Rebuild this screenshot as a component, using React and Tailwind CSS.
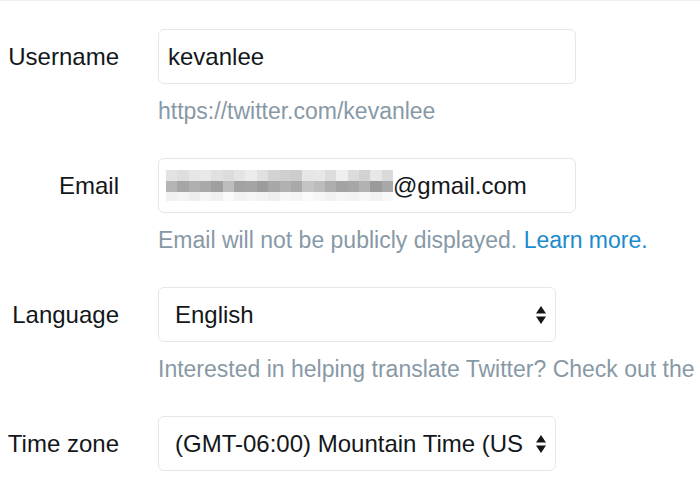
import React from "react";

const mosaic = [
  ["#e3e3e3", "#dedede", "#e6e6e6", "#e9e9e9", "#e1e1e1", "#dcdcdc", "#e4e4e4", "#ececec", "#e0e0e0", "#d3d3d3", "#cfcfcf", "#cccccc", "#e6e6e6", "#e8e8e8", "#dddddd", "#efefef", "#dcdcdc", "#d2d2d2", "#e7e7e7", "#dadada"],
  ["#b5b5b5", "#a6a6a6", "#b0b0b0", "#a9a9a9", "#9f9f9f", "#bdbdbd", "#a2a2a2", "#a4a4a4", "#9c9c9c", "#a7a7a7", "#b1b1b1", "#a9a9a9", "#c4c4c4", "#bcbcbc", "#aeaeae", "#a3a3a3", "#a6a6a6", "#b2b2b2", "#9a9a9a", "#a8a8a8"],
  ["#f1f1f1", "#f4f4f4", "#eeeeee", "#f6f6f6", "#f0f0f0", "#fafafa", "#f2f2f2", "#f5f5f5", "#f3f3f3", "#efefef", "#f7f7f7", "#f4f4f4", "#fafafa", "#f6f6f6", "#f1f1f1", "#f5f5f5", "#f3f3f3", "#f7f7f7", "#f2f2f2", "#f8f8f8"],
];

function Arrows() {
  return (
    <svg width="12" height="20" viewBox="0 0 12 20" className="shrink-0">
      <path d="M6 1 L11 8.5 L1 8.5 Z" fill="#14171a" />
      <path d="M6 19 L11 11.5 L1 11.5 Z" fill="#14171a" />
    </svg>
  );
}

function Row({ label, children, help }) {
  return (
    <div className="flex mb-[34px]">
      <div className="w-[119px] h-[55px] shrink-0 flex items-center justify-end text-[24px] text-[#14171a]">
        {label}
      </div>
      <div className="ml-[39px] flex flex-col">
        {children}
        {help && <div className="mt-[14px] text-[23px] leading-[26px] text-[#8899a6] whitespace-nowrap">{help}</div>}
      </div>
    </div>
  );
}

function Field({ children }) {
  return (
    <div className="w-[418px] h-[55px] border border-[#e1e8ed] rounded-[6px] flex items-center px-[7px] text-[24px] text-[#14171a]">
      {children}
    </div>
  );
}

function Select({ value }) {
  return (
    <div className="w-[398px] h-[55px] border border-[#e1e8ed] rounded-[6px] flex items-center pl-[16px] pr-[8px] text-[24px] text-[#14171a] gap-[6px]">
      <span className="flex-1 whitespace-nowrap">{value}</span>
      <Arrows />
    </div>
  );
}

export default function App() {
  return (
    <div className="w-[700px] h-[500px] overflow-hidden bg-white border-t border-[#f0f0f0] pt-[28px]" style={{ fontFamily: '"Liberation Sans", Arial, sans-serif' }}>
      <Row label="Username" help="https://twitter.com/kevanlee">
        <Field>
          <span className="ml-[2px]">kevanlee</span>
        </Field>
      </Row>
      <Row
        label="Email"
        help={
          <>
            Email will not be publicly displayed. <span className="text-[#1b8bcd]">Learn more.</span>
          </>
        }
      >
        <Field>
          <div className="w-[227px] shrink-0 flex flex-col">
            {mosaic.map((row, i) => (
              <div key={i} className={i === 2 ? "grid grid-cols-20 h-[9px]" : "grid grid-cols-20 h-[11px]"}>
                {row.map((c, j) => (
                  <div key={j} style={{ backgroundColor: c }} />
                ))}
              </div>
            ))}
          </div>
          <span>@gmail.com</span>
        </Field>
      </Row>
      <Row label="Language" help="Interested in helping translate Twitter? Check out the Translation Center.">
        <Select value="English" />
      </Row>
      <Row label="Time zone">
        <Select value="(GMT-06:00) Mountain Time (US" />
      </Row>
    </div>
  );
}
